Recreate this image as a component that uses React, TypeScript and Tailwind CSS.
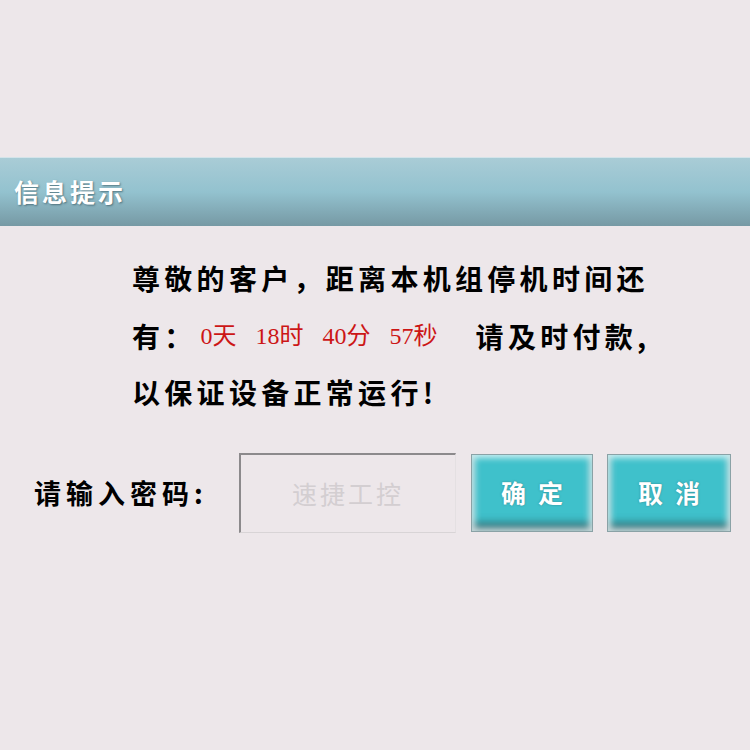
import React from "react";

const cjk = { fontFamily: '"Noto Sans CJK SC", "Noto Sans", sans-serif' };
const red = { fontFamily: '"Liberation Serif", "Noto Sans CJK SC", serif' };

export default function App() {
  return (
    <div className="w-[750px] h-[750px] bg-[#ede7ea] flex flex-col" style={cjk}>
      <div className="h-[157px]" />
      <div className="h-[69px] flex items-center pl-[14px] bg-gradient-to-b from-[#a9ccd6] via-[#93c2cf] to-[#7699a4] border-t border-[#d4e4ea]">
        <span className="text-[25px] font-bold text-white tracking-[3px] [text-shadow:1px_1px_2px_rgba(40,70,80,0.6)]">信息提示</span>
      </div>
      <div className="pl-[132px] pt-[24px] flex flex-col text-black text-[28px] font-bold tracking-[4.3px]">
        <div className="h-[56px] flex items-center">尊敬的客户，距离本机组停机时间还</div>
        <div className="h-[60px] flex items-center">
          <span>有：</span>
          <span className="ml-[4px] text-[#cc1616] text-[24px] font-normal tracking-normal flex gap-[19px] w-[275px]" style={red}>
            <span>0天</span>
            <span>18时</span>
            <span>40分</span>
            <span>57秒</span>
          </span>
          <span>请及时付款,</span>
        </div>
        <div className="h-[52px] flex items-center">以保证设备正常运行!</div>
      </div>
      <div className="mt-[35px] flex items-center">
        <div className="w-[239px] pl-[34px] text-[27px] font-bold tracking-[5px] text-black">请输入密码:</div>
        <div className="w-[217px] h-[80px] border-t-2 border-l-2 border-[#8c8a8c] border-r border-b border-r-[#e4e0e2] border-b-[#d8d4d6] flex items-center justify-center text-[25px] text-[#d3ced1] tracking-[3px]">速捷工控</div>
        <button className="ml-[15px] w-[122px] h-[78px] bg-[#3fc1cb] border border-[#8aa2a6] text-white text-[25px] font-bold tracking-[12px] pl-[12px] shadow-[inset_0_0_6px_3px_rgba(255,255,255,0.75),inset_0_-10px_8px_-2px_rgba(40,70,75,0.7)] [text-shadow:0_0_2px_rgba(30,90,95,0.6)]">确定</button>
        <button className="ml-[14px] w-[124px] h-[78px] bg-[#3fc1cb] border border-[#8aa2a6] text-white text-[25px] font-bold tracking-[12px] pl-[12px] shadow-[inset_0_0_6px_3px_rgba(255,255,255,0.75),inset_0_-10px_8px_-2px_rgba(40,70,75,0.7)] [text-shadow:0_0_2px_rgba(30,90,95,0.6)]">取消</button>
      </div>
    </div>
  );
}
